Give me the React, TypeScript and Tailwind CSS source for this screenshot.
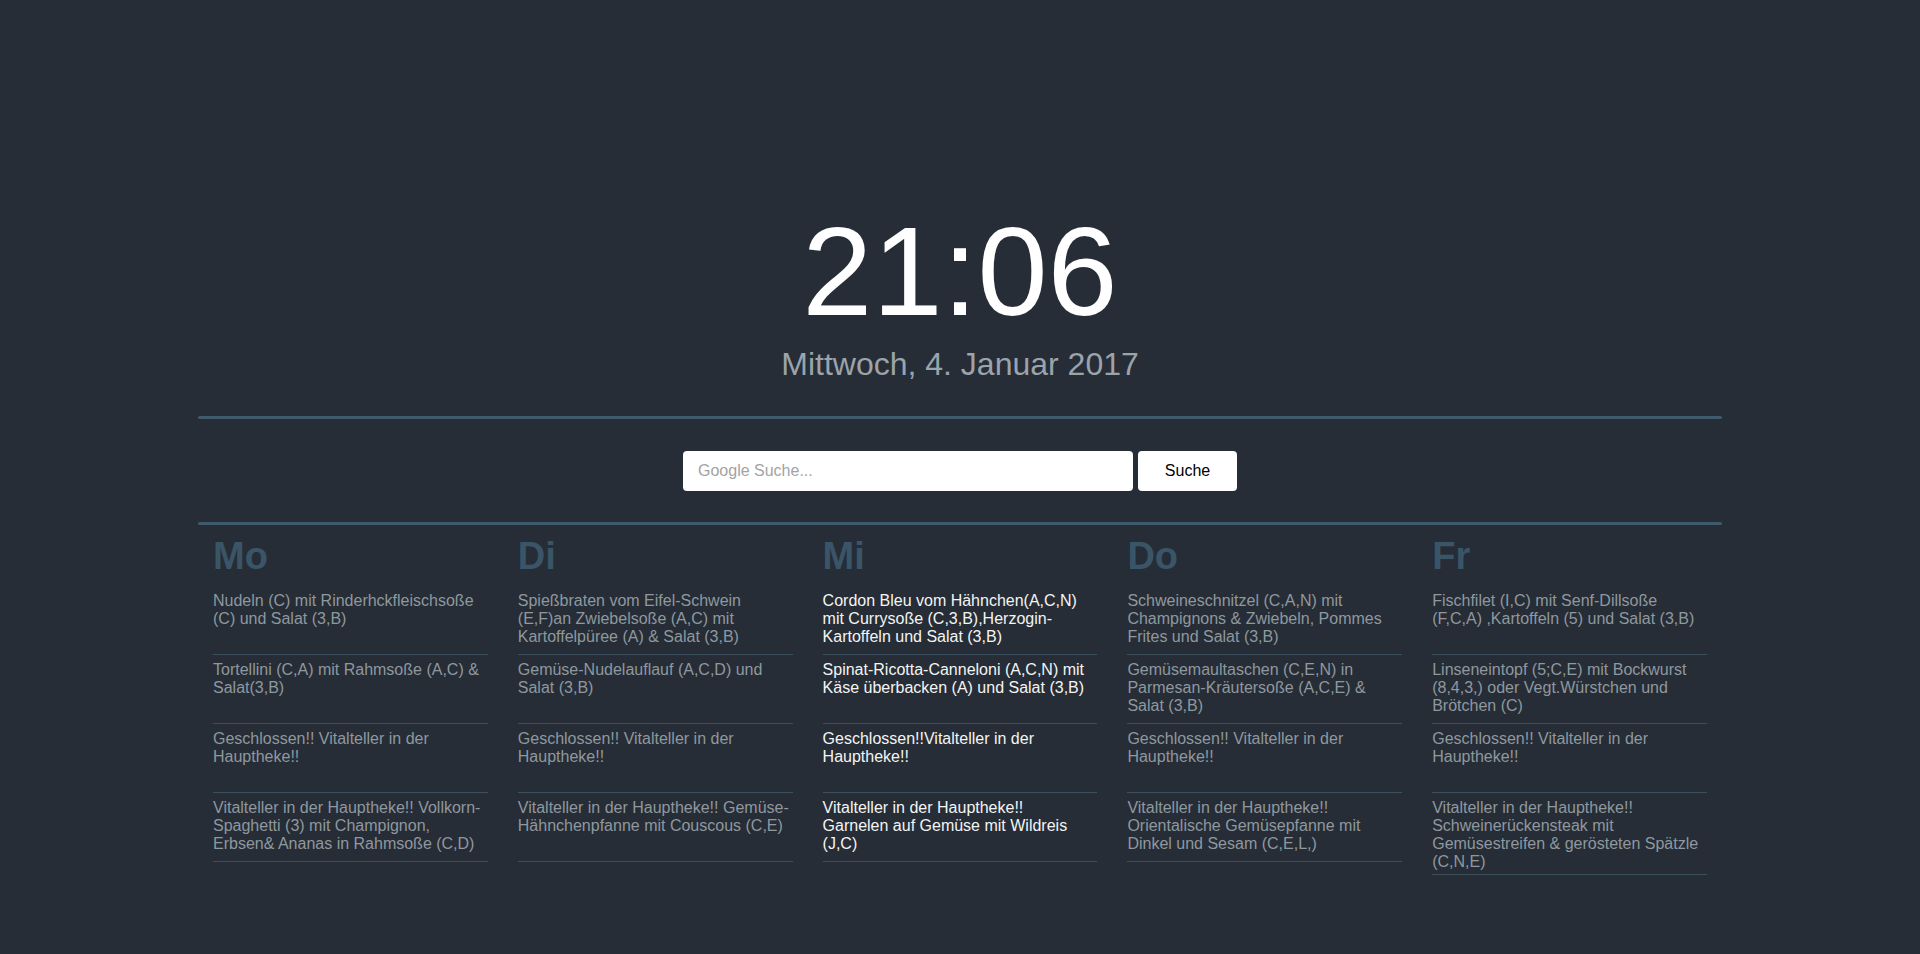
import React from "react";

const days = [
  {
    name: "Mo",
    today: false,
    meals: [
      "Nudeln (C) mit Rinderhckfleischsoße (C) und Salat (3,B)",
      "Tortellini (C,A) mit Rahmsoße (A,C) & Salat(3,B)",
      "Geschlossen!! Vitalteller in der Hauptheke!!",
      "Vitalteller in der Hauptheke!! Vollkorn-Spaghetti (3) mit Champignon, Erbsen& Ananas in Rahmsoße (C,D)",
    ],
  },
  {
    name: "Di",
    today: false,
    meals: [
      "Spießbraten vom Eifel-Schwein (E,F)an Zwiebelsoße (A,C) mit Kartoffelpüree (A) & Salat (3,B)",
      "Gemüse-Nudelauflauf (A,C,D) und Salat (3,B)",
      "Geschlossen!! Vitalteller in der Hauptheke!!",
      "Vitalteller in der Hauptheke!! Gemüse-Hähnchenpfanne mit Couscous (C,E)",
    ],
  },
  {
    name: "Mi",
    today: true,
    meals: [
      "Cordon Bleu vom Hähnchen(A,C,N) mit Currysoße (C,3,B),Herzogin-Kartoffeln und Salat (3,B)",
      "Spinat-Ricotta-Canneloni (A,C,N) mit Käse überbacken (A) und Salat (3,B)",
      "Geschlossen!!Vitalteller in der Hauptheke!!",
      "Vitalteller in der Hauptheke!!\nGarnelen auf Gemüse mit Wildreis (J,C)",
    ],
  },
  {
    name: "Do",
    today: false,
    meals: [
      "Schweineschnitzel (C,A,N) mit Champignons & Zwiebeln, Pommes Frites und Salat (3,B)",
      "Gemüsemaultaschen (C,E,N) in Parmesan-Kräutersoße (A,C,E) & Salat (3,B)",
      "Geschlossen!! Vitalteller in der Hauptheke!!",
      "Vitalteller in der Hauptheke!!\nOrientalische Gemüsepfanne mit Dinkel und Sesam (C,E,L,)",
    ],
  },
  {
    name: "Fr",
    today: false,
    meals: [
      "Fischfilet (I,C) mit Senf-Dillsoße (F,C,A) ,Kartoffeln (5) und Salat (3,B)",
      "Linseneintopf (5;C,E) mit Bockwurst (8,4,3,) oder Vegt.Würstchen und Brötchen (C)",
      "Geschlossen!! Vitalteller in der Hauptheke!!",
      "Vitalteller in der Hauptheke!!\nSchweinerückensteak mit Gemüsestreifen & gerösteten Spätzle (C,N,E)",
    ],
  },
];

export default function App() {
  return (
    <div className="min-h-screen bg-[#262d36] font-['Liberation_Sans',Arial,sans-serif]">
      <div className="mx-auto w-[1524px] pt-[209px] pb-16">
        {/* Clock */}
        <div className="text-center text-[126px] leading-none text-white">
          21:06
        </div>
        <div className="mt-[11px] text-center text-[32px] leading-[36px] text-[#9ba3ab]">
          Mittwoch, 4. Januar 2017
        </div>

        <div className="mt-[34px] h-[3px] rounded-full bg-[#3e5a6b]" />

        {/* Search */}
        <form
          className="mt-[32px] flex justify-center gap-[5px]"
          onSubmit={(e) => e.preventDefault()}
        >
          <input
            type="text"
            placeholder="Google Suche..."
            className="h-10 w-[450px] rounded-sm bg-white px-[15px] text-base text-zinc-900 placeholder:text-[#a3a3a3] focus:outline-none"
          />
          <button
            type="submit"
            className="h-10 w-[99px] rounded-sm bg-white text-base text-black"
          >
            Suche
          </button>
        </form>

        <div className="mt-[31px] h-[3px] rounded-full bg-[#3e5a6b]" />

        {/* Weekly menu */}
        <div className="grid grid-cols-5">
          {days.map((day) => (
            <div key={day.name} className="px-[15px]">
              <h2 className="mt-[10px] text-[38px] font-bold leading-[42px] text-[#3a5567]">
                {day.name}
              </h2>
              <div className="mt-[9px]">
                {day.meals.map((meal, i) => (
                  <div
                    key={i}
                    className={`min-h-[69px] whitespace-pre-line border-b border-[#3b4f5d] pt-[6px] pb-[3px] text-base leading-[18px] ${
                      day.today ? "text-[#f4f4f4]" : "text-[#8f989f]"
                    }`}
                  >
                    {meal}
                  </div>
                ))}
              </div>
            </div>
          ))}
        </div>
      </div>
    </div>
  );
}
